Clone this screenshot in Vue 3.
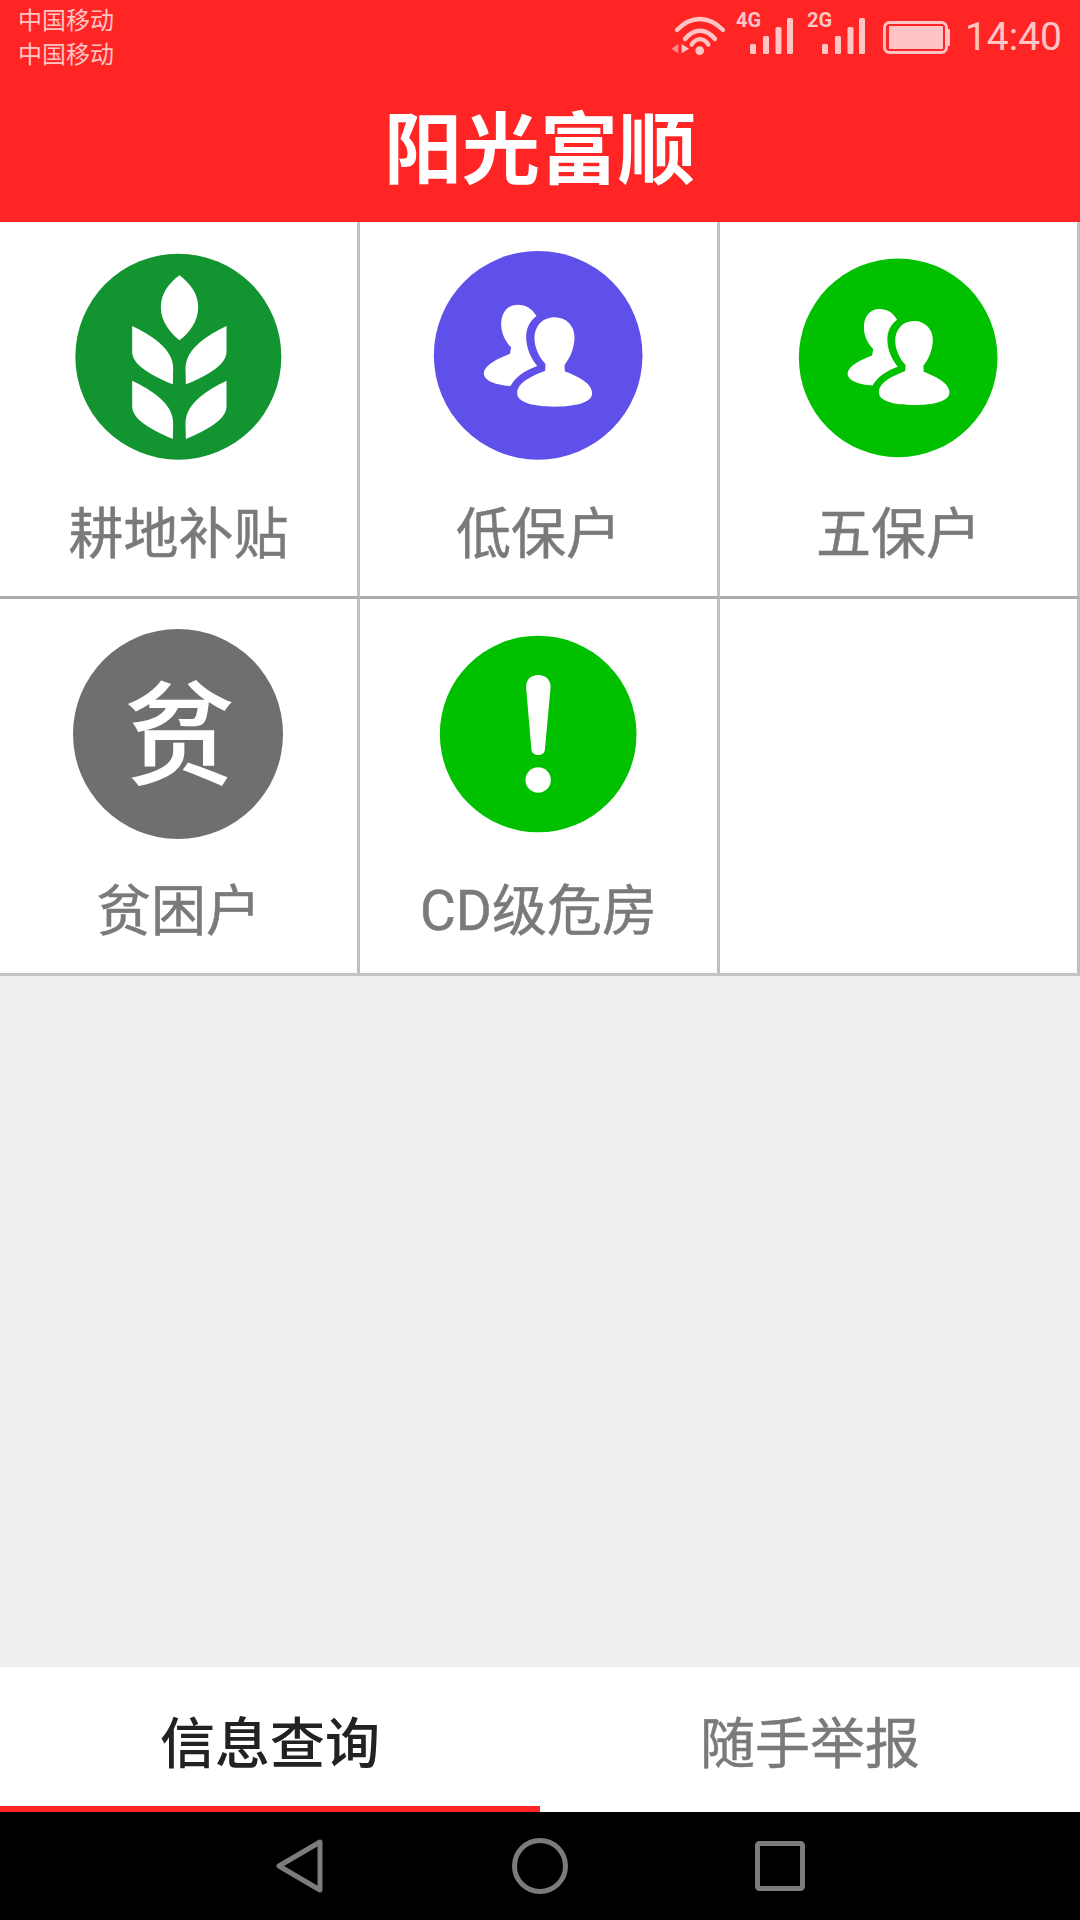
<script setup>
// 首页宫格
const items = [
  { name: '耕地补贴', type: 'wheat' },
  {
    name: '低保户',
    type: 'people',
    color: '#5f50ea',
    cy: 376,
    r: 313,
    transform: ''
  },
  {
    name: '五保户',
    type: 'people',
    color: '#00c000',
    cy: 383.5,
    r: 298,
    transform: 'translate(384 381) scale(0.94) translate(-382.5 -377)'
  },
  { name: '贫困户', type: 'poor' },
  { name: 'CD级危房', type: 'alert' },
  { name: '', type: 'empty' }
];

const tabs = ['信息查询', '随手举报'];
const bars = [
  { x: 0, y: 44 },
  { x: 13, y: 36 },
  { x: 25.5, y: 27 },
  { x: 37, y: 18 }
];
</script>

<template>
  <div class="page">
    <header class="header">
      <div class="status-bar">
        <div class="carriers">
          <span>中国移动</span>
          <span>中国移动</span>
        </div>
        <div class="status-right">
          <svg class="wifi" width="58" height="60" viewBox="0 0 174 180">
            <g fill="none" stroke="#ffc4c4" stroke-width="13" stroke-linecap="round">
              <path d="M18 90 C60 46 112 46 156 90" />
              <path d="M42 117 C70 84 104 84 132 117" />
              <path d="M62 134 C76 112 98 112 112 134" />
            </g>
            <circle cx="86" cy="152" r="13" fill="#ffc4c4" />
            <path d="M1 146 L22 132 L22 160 Z" fill="#ff8888" />
            <path d="M32 132 L54 146 L32 160 Z" fill="#ffc4c4" />
          </svg>
          <svg class="signal" width="60" height="60" viewBox="0 0 60 60">
            <text x="1" y="27" class="net">4G</text>
            <rect v-for="b in bars" :key="b.x" :x="b.x + 15" :y="b.y" width="6" :height="54 - b.y" rx="1.5" fill="#ffc4c4" />
          </svg>
          <svg class="signal" width="60" height="60" viewBox="0 0 60 60">
            <text x="0" y="27" class="net">2G</text>
            <rect v-for="b in bars" :key="b.x" :x="b.x + 15" :y="b.y" width="6" :height="54 - b.y" rx="1.5" fill="#ffc4c4" />
          </svg>
          <svg class="battery" width="68" height="60" viewBox="0 0 68 60">
            <rect x="1.5" y="22.5" width="62" height="30" rx="5" fill="none" stroke="#ffc4c4" stroke-width="3" />
            <rect x="6" y="26" width="54" height="23" fill="#ffc4c4" />
            <rect x="64" y="29" width="3" height="17" rx="1" fill="#ffc4c4" />
          </svg>
          <span class="time">14:40</span>
        </div>
      </div>
      <h1 class="title">阳光富顺</h1>
    </header>

    <main class="main">
      <div class="grid">
        <div v-for="(item, index) in items" :key="index" class="cell" :class="{ 'first-row': index < 3 }">
          <div class="icon-box">
            <svg v-if="item.type === 'wheat'" width="212" height="212" viewBox="67.5 63 636 636">
              <circle cx="383.5" cy="380" r="309" fill="#129431" />
              <g fill="#fff">
                <path d="M387 136 C355 160 331 190 331 232 C331 275 360 310 387 331 C415 310 443 275 443 232 C443 190 418 160 387 136 Z" />
                <path d="M245 288 L245 365 C245 400 290 432 367 463 L368 415 C368 355 300 315 245 288 Z" />
                <path d="M528 288 L528 365 C528 400 483 432 406 463 L405 415 C405 355 473 315 528 288 Z" />
                <path d="M245 452 L245 529 C245 564 290 596 367 627 L368 579 C368 519 300 479 245 452 Z" />
                <path d="M528 452 L528 529 C528 564 483 596 406 627 L405 579 C405 519 473 479 528 452 Z" />
              </g>
            </svg>

            <svg v-else-if="item.type === 'people'" width="212" height="212" viewBox="67.5 63 636 636">
              <circle cx="383" :cy="item.cy" :r="item.r" :fill="item.color" />
              <g fill="#fff" :transform="item.transform">
                <path d="M378 258 C365 235 345 224 322 224 C292 224 272 248 272 282 C272 310 285 335 302 352 L298 372 C262 385 222 405 220 430 C220 452 255 466 300 468 C312 445 340 422 380 408 C362 385 347 355 347 320 C347 295 358 272 378 258 Z" />
                <path d="M432 262 C395 262 372 290 372 325 C372 355 388 385 405 402 L404 422 C370 436 320 455 320 490 C320 518 370 530 432 530 C495 530 545 518 545 490 C545 458 497 438 463 424 L462 405 C478 385 492 355 492 322 C492 288 468 262 432 262 Z" />
              </g>
            </svg>

            <div v-else-if="item.type === 'poor'" class="poor-icon">贫</div>

            <svg v-else-if="item.type === 'alert'" width="212" height="212" viewBox="397.5 204 636 636">
              <circle cx="713" cy="522" r="295" fill="#00c000" />
              <path d="M677 385 C675 360 690 345 713 345 C736 345 752 360 750 385 L733 570 C731 590 695 590 693 570 Z" fill="#fff" />
              <circle cx="713" cy="660" r="38" fill="#fff" />
            </svg>
          </div>
          <span class="cell-name">{{ item.name }}</span>
        </div>
      </div>
    </main>

    <div class="tabs">
      <div v-for="(tab, index) in tabs" :key="tab" class="tab" :class="{ active: index === 0 }">
        {{ tab }}
      </div>
    </div>

    <nav class="nav-bar">
      <div class="nav-item">
        <svg width="60" height="60" viewBox="0 0 60 60">
          <path d="M50 6 L9 30 L50 54 Z" fill="none" stroke="#7c7c7c" stroke-width="5" stroke-linejoin="round" />
        </svg>
      </div>
      <div class="nav-item">
        <svg width="60" height="60" viewBox="0 0 60 60">
          <circle cx="30" cy="30" r="25.5" fill="none" stroke="#7c7c7c" stroke-width="5" />
        </svg>
      </div>
      <div class="nav-item">
        <svg width="60" height="60" viewBox="0 0 60 60">
          <rect x="7.5" y="7.5" width="45" height="45" rx="2" fill="none" stroke="#7c7c7c" stroke-width="5" />
        </svg>
      </div>
    </nav>
  </div>
</template>

<style scoped>
.page {
  display: flex;
  flex-direction: column;
  width: 1080px;
  height: 1920px;
  overflow: hidden;
  background-color: #eeeeee;
  font-family: Roboto, "Noto Sans CJK SC", sans-serif;
}

.header {
  height: 222px;
  background-color: #ff2525;
  flex-shrink: 0;
}

.status-bar {
  display: flex;
  justify-content: space-between;
  height: 78px;
  padding: 4px 18px 0 18px;
  box-sizing: border-box;
}

.carriers {
  display: flex;
  flex-direction: column;
  font-size: 24px;
  line-height: 34px;
  color: #ffc4c4;
}

.status-right {
  display: flex;
  align-items: flex-start;
  margin-top: -4px;
}

.status-right svg {
  display: block;
}

.wifi {
  margin-right: 6px;
}

.signal {
  margin-right: -1px;
}

.signal + .signal {
  margin-left: 13px;
}

.battery {
  margin-left: 17px;
}

.net {
  font-size: 20px;
  font-weight: 700;
  fill: #ffc4c4;
}

.time {
  margin-left: 14px;
  font-size: 39px;
  line-height: 74px;
  color: #ffc4c4;
}

.title {
  margin: 0;
  height: 144px;
  font-size: 78px;
  font-weight: 700;
  line-height: 148px;
  text-align: center;
  color: #fff;
}

.main {
  flex: 1;
}

.grid {
  display: grid;
  grid-template-columns: repeat(3, 360px);
  background-color: #fff;
}

.cell {
  display: flex;
  flex-direction: column;
  align-items: center;
  height: 377px;
  padding-top: 29px;
  box-sizing: border-box;
  border-right: 3px solid #c0c0c0;
  border-bottom: 3px solid #c4c4c4;
}

.cell.first-row {
  border-bottom-color: #aaaaaa;
}

.icon-box {
  width: 212px;
  height: 212px;
}

.icon-box svg {
  display: block;
}

.poor-icon {
  display: flex;
  align-items: center;
  justify-content: center;
  width: 210px;
  height: 210px;
  margin: 1px 0 0 0.5px;
  padding: 8px 0 0 3px;
  box-sizing: border-box;
  border-radius: 50%;
  background-color: #706e6f;
  color: #fff;
  font-size: 112px;
  font-weight: 500;
  line-height: 1;
}

.cell-name {
  margin-top: 35px;
  font-size: 55px;
  line-height: 72px;
  color: #7a7a7a;
  -webkit-text-stroke: 0.5px #7a7a7a;
}

.tabs {
  display: flex;
  height: 145px;
  flex-shrink: 0;
  background-color: #fff;
}

.tab {
  flex: 1;
  height: 145px;
  box-sizing: border-box;
  border-bottom: 6px solid transparent;
  font-size: 55px;
  line-height: 155px;
  text-align: center;
  color: #7a7a7a;
  -webkit-text-stroke: 0.5px #7a7a7a;
}

.tab.active {
  border-bottom-color: #ff2525;
  color: #222;
  font-weight: 500;
  -webkit-text-stroke: 0;
}

.nav-bar {
  display: flex;
  justify-content: center;
  align-items: center;
  height: 108px;
  flex-shrink: 0;
  background-color: #000;
}

.nav-item {
  display: flex;
  justify-content: center;
  width: 240px;
}

.nav-item svg {
  display: block;
}
</style>
